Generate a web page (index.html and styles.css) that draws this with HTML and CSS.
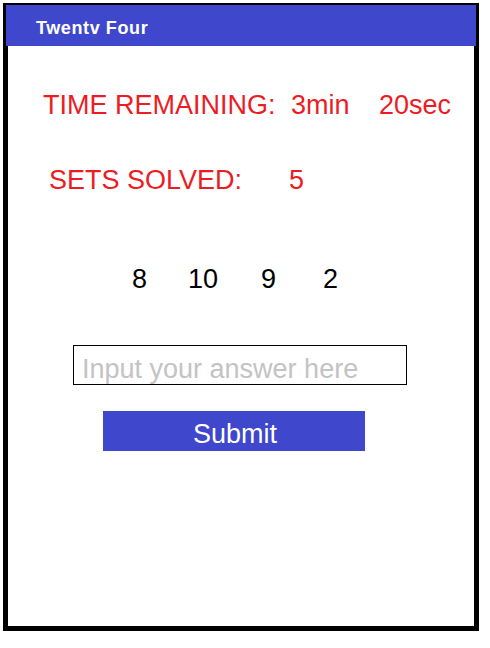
FILE: index.html
```html
<!DOCTYPE html>
<html>
<head>
<meta charset="utf-8">
<title>Twentv Four</title>
<link rel="stylesheet" href="styles.css">
</head>
<body>
<div class="frame">
  <header class="appbar"><span class="title">Twentv Four</span></header>
  <main class="content">
    <div class="row time-row">
      <span>TIME REMAINING:</span>
      <span>3min</span>
      <span>20sec</span>
    </div>
    <div class="row sets-row">
      <span>SETS SOLVED:</span>
      <span>5</span>
    </div>
    <div class="row digits">
      <span>8</span>
      <span>10</span>
      <span>9</span>
      <span>2</span>
    </div>
    <input class="answer" type="text" placeholder="Input your answer here">
    <button class="submit" type="button">Submit</button>
  </main>
</div>
</body>
</html>
```
FILE: styles.css
```css
html, body {
  margin: 0;
  padding: 0;
  background: #ffffff;
}
body {
  font-family: "Liberation Sans", Arial, sans-serif;
}
.frame {
  box-sizing: border-box;
  margin: 3px 0 0 3px;
  width: 476px;
  height: 628px;
  border: 5px solid #000000;
  border-top-width: 2px;
  background: #ffffff;
}
.appbar {
  box-sizing: border-box;
  height: 41px;
  margin: 0 -2px;
  background: #3f48cc;
  padding: 13px 0 0 30px;
}
.title {
  display: block;
  color: #ffffff;
  font-weight: bold;
  font-size: 18px;
  line-height: 21px;
  letter-spacing: 0.6px;
}
.content {
  display: flex;
  flex-direction: column;
  align-items: flex-start;
}
.row {
  display: grid;
  font-size: 27px;
  line-height: 31px;
}
.time-row {
  color: #ed1c24;
  margin-top: 44px;
  margin-left: 35px;
  grid-template-columns: 248px 88px auto;
}
.sets-row {
  color: #ed1c24;
  margin-top: 44px;
  margin-left: 41px;
  grid-template-columns: 240px auto;
}
.digits {
  color: #000000;
  margin-top: 68px;
  margin-left: 124px;
  grid-template-columns: 56px 73px 62px auto;
}
.answer {
  box-sizing: border-box;
  margin: 50px 0 0 65px;
  width: 334px;
  height: 40px;
  border: 1px solid #000000;
  border-radius: 0;
  padding: 8px 0 0 8px;
  font-family: "Liberation Sans", Arial, sans-serif;
  font-size: 27px;
  line-height: 31px;
  color: #000000;
  background: #ffffff;
  outline: none;
}
.answer::placeholder {
  color: #c3c3c3;
  opacity: 1;
}
.submit {
  box-sizing: border-box;
  margin: 26px 0 0 95px;
  width: 262px;
  height: 40px;
  border: none;
  border-radius: 0;
  padding: 6px 0 0 2px;
  background: #3f48cc;
  color: #ffffff;
  font-family: "Liberation Sans", Arial, sans-serif;
  font-size: 27px;
  line-height: 31px;
}
```
